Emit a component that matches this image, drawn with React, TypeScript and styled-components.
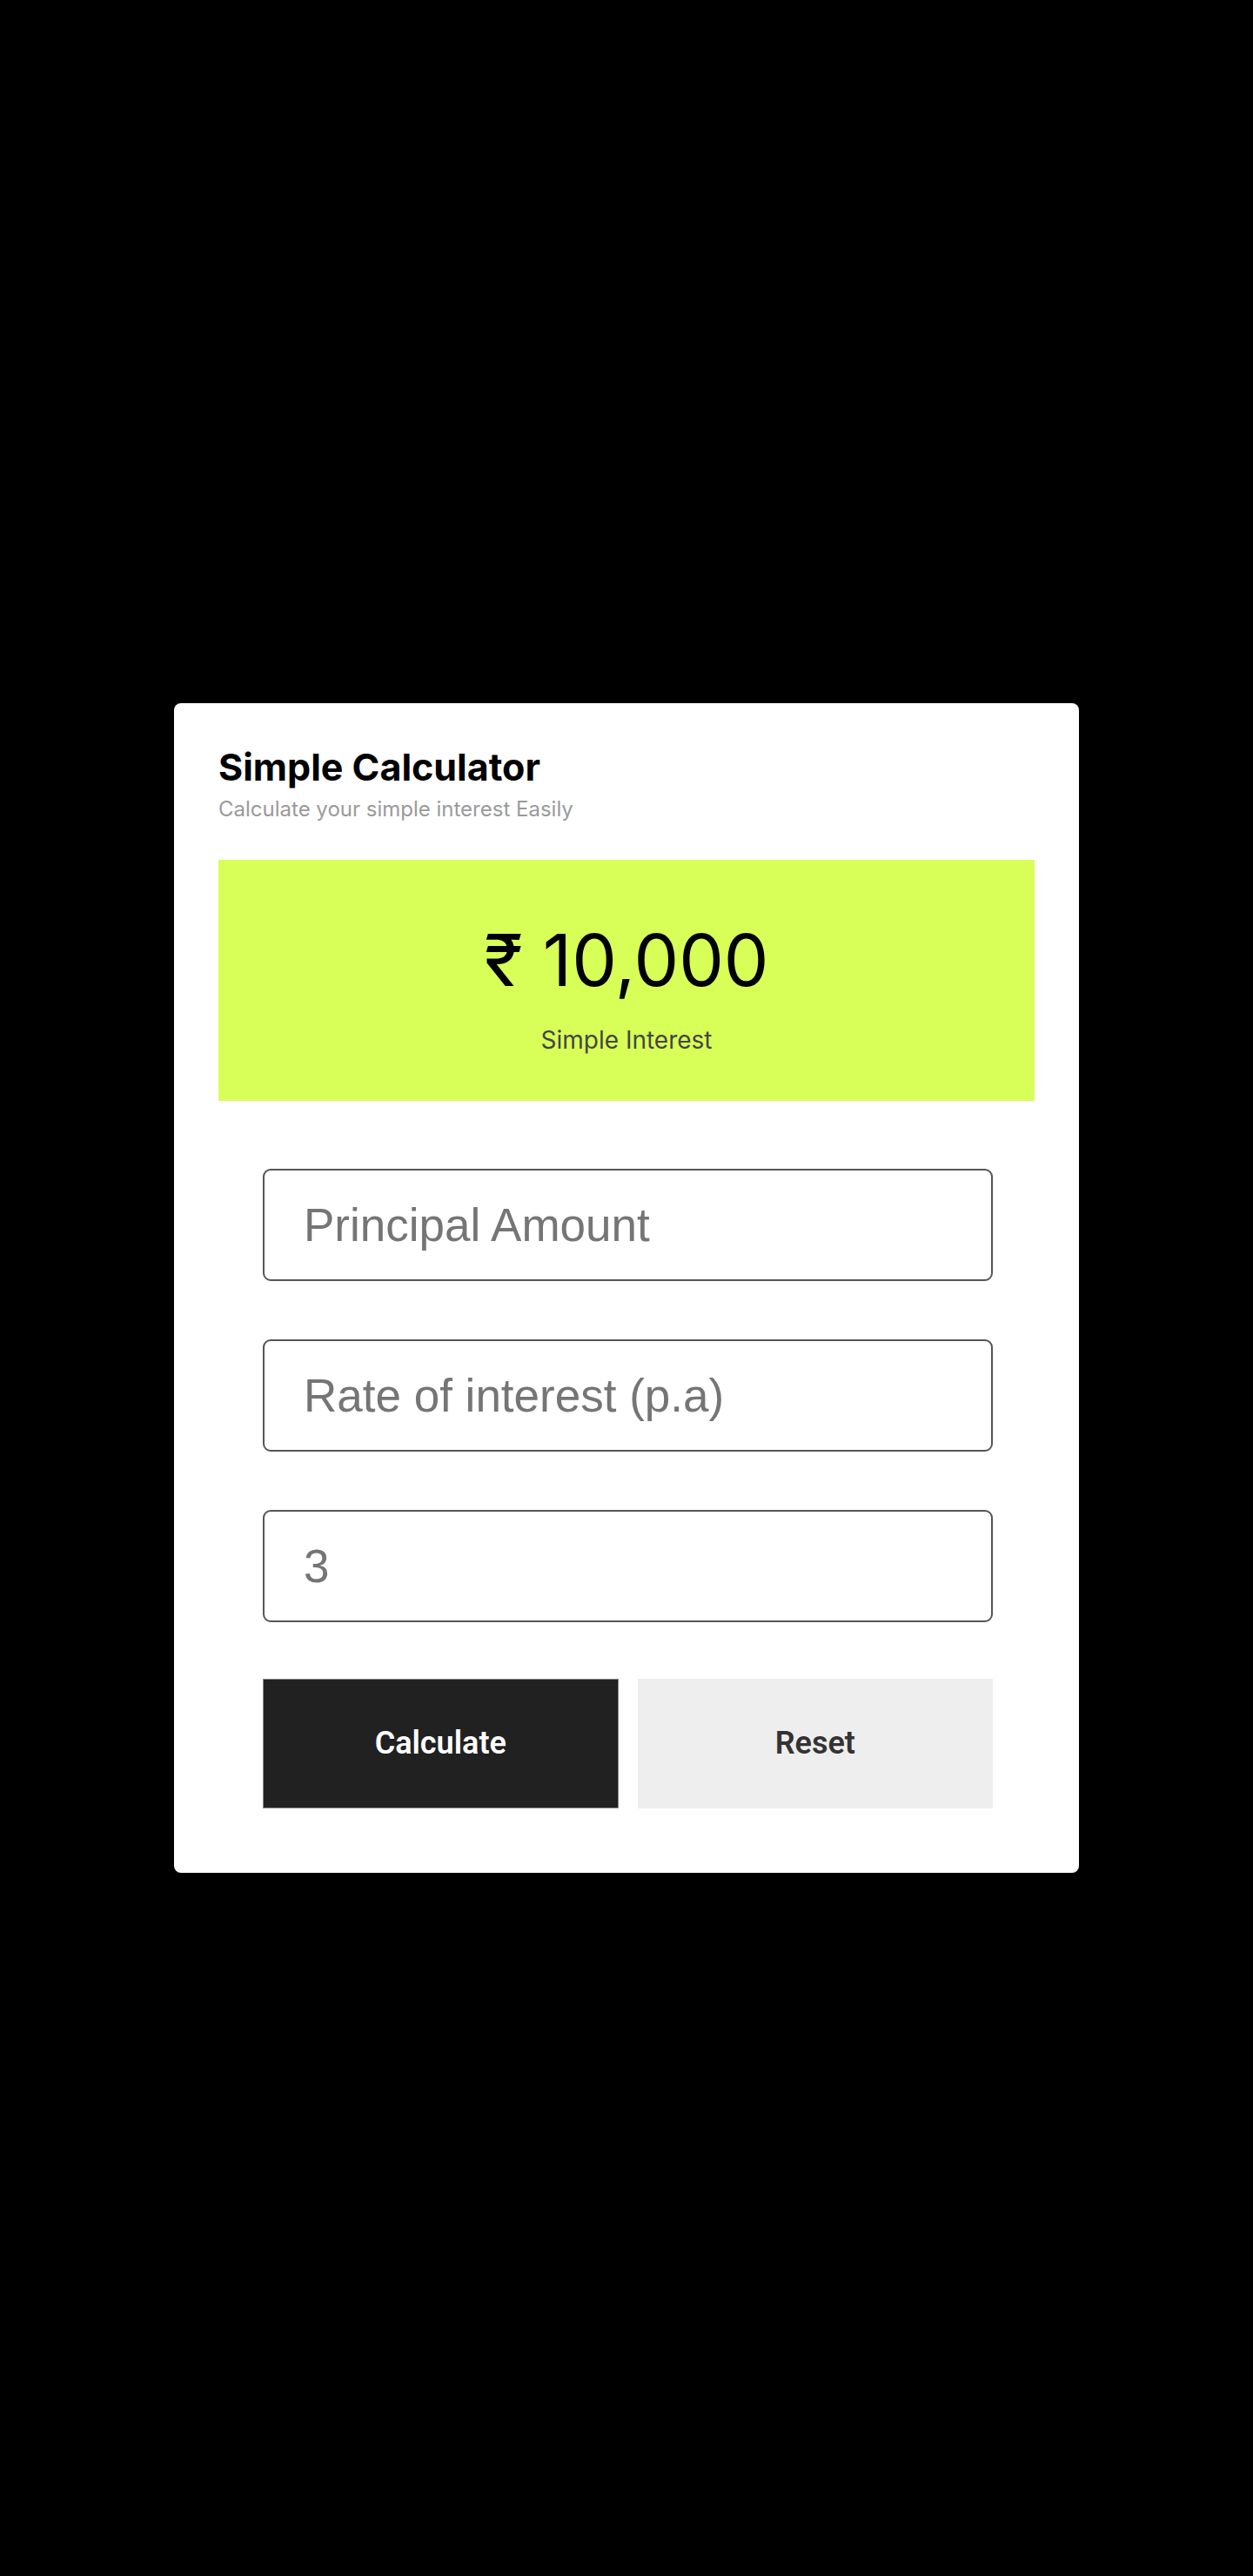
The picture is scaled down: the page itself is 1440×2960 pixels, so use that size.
import React from 'react';
import styled, { createGlobalStyle } from 'styled-components';

const GlobalStyle = createGlobalStyle`
  * {
    box-sizing: border-box;
  }

  body {
    margin: 0;
    background: #000;
    font-family: Inter, "Noto Sans", sans-serif;
  }
`;

const Page = styled.div`
  min-height: 2960px;
  display: flex;
  justify-content: center;
  align-items: center;
`;

const Card = styled.div`
  width: 1040px;
  background: #fff;
  border-radius: 8px;
  padding: 48px 51px 74px;
`;

const Header = styled.div`
  margin-bottom: 43px;
`;

const Title = styled.h1`
  margin: 0;
  font-size: 43px;
  line-height: 1.2;
  font-weight: 700;
  color: #000;
`;

const Subtitle = styled.p`
  margin: 8px 0 0;
  font-size: 24px;
  line-height: 1.2;
  color: #9a9a9a;
`;

const ResultBox = styled.div`
  background: #d8fe58;
  display: flex;
  flex-direction: column;
  align-items: center;
  padding: 67px 0 52px;
`;

const Amount = styled.div`
  font-size: 82px;
  line-height: 1.2;
  color: #000;
`;

const AmountLabel = styled.div`
  margin-top: 26px;
  font-size: 28px;
  line-height: 1.2;
  color: #454545;
`;

const Form = styled.form`
  display: flex;
  flex-direction: column;
  gap: 67px;
  margin-top: 78px;
  padding: 0 48px 0 51px;
`;

const Field = styled.input`
  height: 129px;
  width: 100%;
  border: 2px solid #555;
  border-radius: 9px;
  padding: 0 45px;
  font-family: "Liberation Sans", Arial, sans-serif;
  font-size: 53px;
  color: #757575;
  background: #fff;
  outline: none;

  &::placeholder {
    color: #757575;
  }
`;

const Actions = styled.div`
  display: flex;
  gap: 22px;
  margin-top: -2px;
`;

const Button = styled.button<{ $primary?: boolean }>`
  flex: 1;
  height: 149px;
  font-family: Roboto, "Liberation Sans", sans-serif;
  font-size: 36px;
  font-weight: 600;
  cursor: pointer;
  border: 1px solid ${(p) => (p.$primary ? '#8a8a8a' : '#eeeeee')};
  background: ${(p) => (p.$primary ? '#212121' : '#eeeeee')};
  color: ${(p) => (p.$primary ? '#fff' : '#333')};
`;

const App = () => {
  return (
    <>
      <GlobalStyle />
      <Page>
        <Card>
          <Header>
            <Title>Simple Calculator</Title>
            <Subtitle>Calculate your simple interest Easily</Subtitle>
          </Header>

          <ResultBox>
            <Amount>₹ 10,000</Amount>
            <AmountLabel>Simple Interest</AmountLabel>
          </ResultBox>

          <Form onSubmit={(e) => e.preventDefault()}>
            <Field type="number" placeholder="Principal Amount" />
            <Field type="number" placeholder="Rate of interest (p.a)" />
            <Field type="number" placeholder="3" />
            <Actions>
              <Button type="submit" $primary>
                Calculate
              </Button>
              <Button type="button">Reset</Button>
            </Actions>
          </Form>
        </Card>
      </Page>
    </>
  );
};

export default App;
